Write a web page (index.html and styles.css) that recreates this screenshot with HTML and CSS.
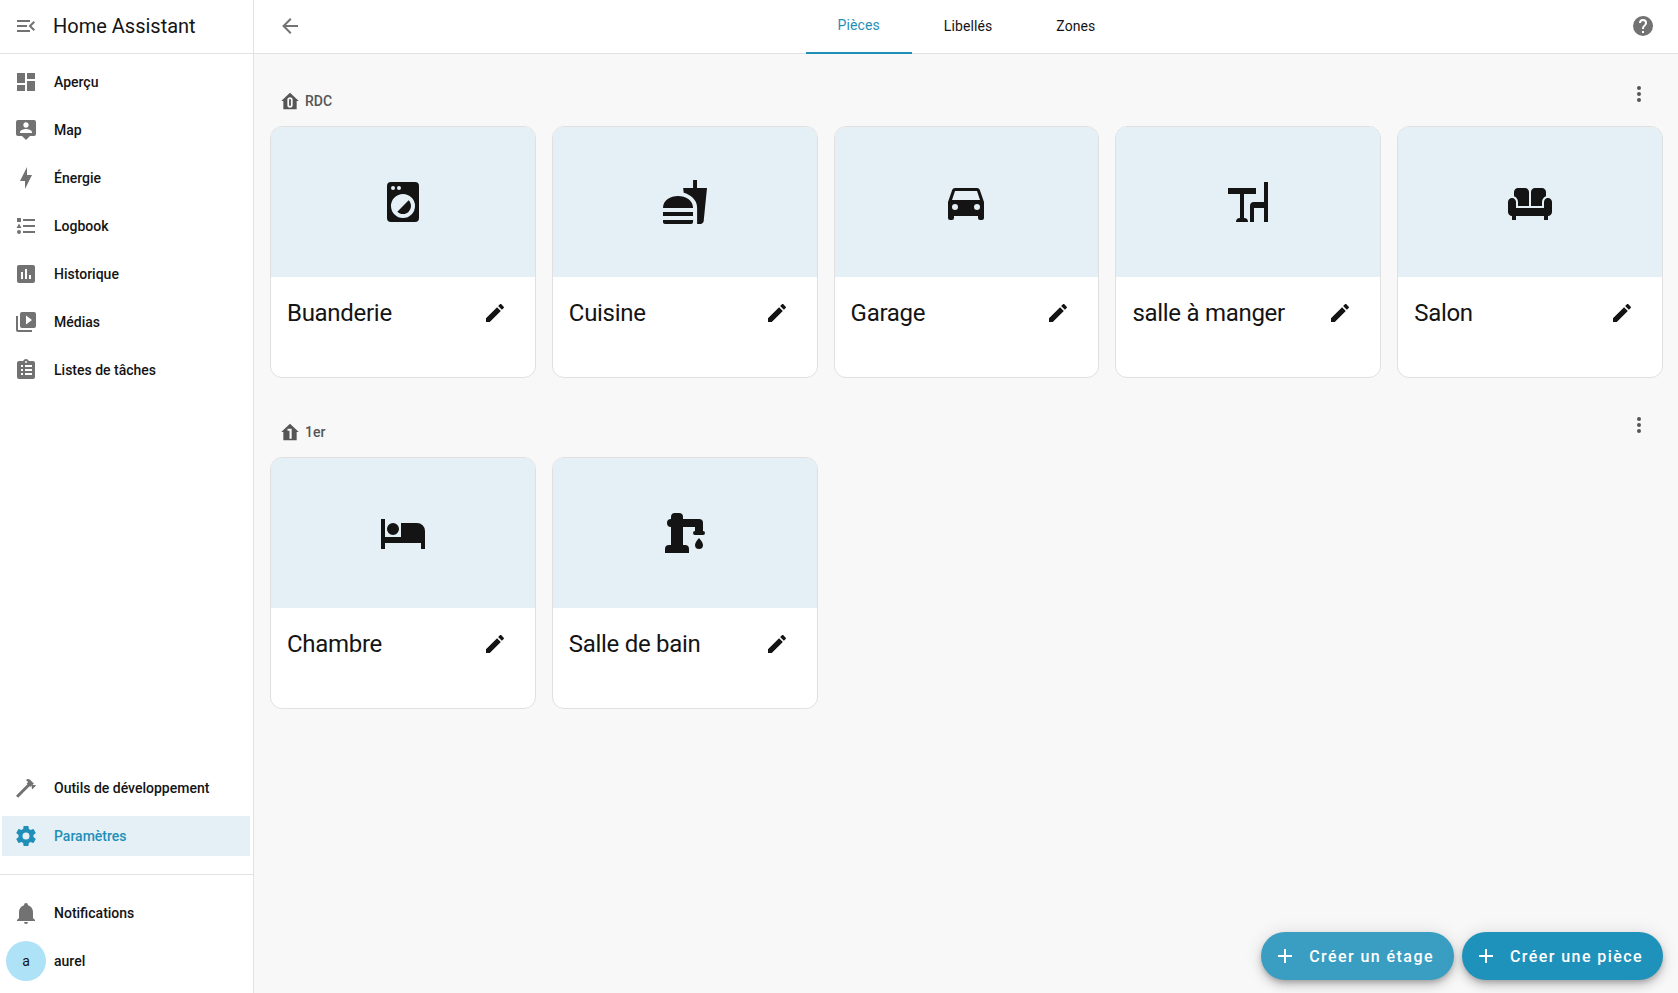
FILE: index.html
```html
<!DOCTYPE html>
<html lang="fr">
<head>
    <meta charset="UTF-8">
    <meta name="viewport" content="width=device-width, initial-scale=1.0">
    <title>Home Assistant</title>
    <link rel="stylesheet" href="styles.css">
</head>
<body>
    <svg class="sprite">
        <symbol id="pencil" viewBox="0 0 24 24"><path d="M20.71,7.04C21.1,6.65 21.1,6 20.71,5.63L18.37,3.29C18,2.9 17.35,2.9 16.96,3.29L15.12,5.12L18.87,8.87M3,17.25V21H6.75L17.81,9.93L14.06,6.18L3,17.25Z"/></symbol>
        <symbol id="dots" viewBox="0 0 24 24"><path d="M12,16A2,2 0 0,1 14,18A2,2 0 0,1 12,20A2,2 0 0,1 10,18A2,2 0 0,1 12,16M12,10A2,2 0 0,1 14,12A2,2 0 0,1 12,14A2,2 0 0,1 10,12A2,2 0 0,1 12,10M12,4A2,2 0 0,1 14,6A2,2 0 0,1 12,8A2,2 0 0,1 10,6A2,2 0 0,1 12,4Z"/></symbol>
        <symbol id="plus" viewBox="0 0 24 24"><path d="M19,13H13V19H11V13H5V11H11V5H13V11H19V13Z"/></symbol>
    </svg>

    <aside class="sidebar">
        <div class="sidebar-header">
            <svg class="icon" viewBox="0 0 24 24"><path d="M21,15.61L19.59,17L14.58,12L19.59,7L21,8.39L17.44,12L21,15.61M3,6H16V8H3V6M3,13V11H13V13H3M3,18V16H16V18H3Z"/></svg>
            <span class="title">Home Assistant</span>
        </div>

        <nav class="nav-list">
            <a class="nav-item">
                <svg class="icon" viewBox="0 0 24 24"><path d="M13,3V9H21V3M13,21H21V11H13M3,21H11V15H3M3,13H11V3H3V13Z"/></svg>
                <span>Aperçu</span>
            </a>
            <a class="nav-item">
                <svg class="icon" viewBox="0 0 24 24"><path d="M20,2H4A2,2 0 0,0 2,4V16A2,2 0 0,0 4,18H8L12,22L16,18H20A2,2 0 0,0 22,16V4A2,2 0 0,0 20,2M12,4.3C13.5,4.3 14.7,5.5 14.7,7C14.7,8.5 13.5,9.7 12,9.7C10.5,9.7 9.3,8.5 9.3,7C9.3,5.5 10.5,4.3 12,4.3M18,15H6V14.1C6,12.1 10,11 12,11C14,11 18,12.1 18,14.1V15Z"/></svg>
                <span>Map</span>
            </a>
            <a class="nav-item">
                <svg class="icon" viewBox="0 0 24 24"><path d="M11 15H6L13 1V9H18L11 23V15Z"/></svg>
                <span>Énergie</span>
            </a>
            <a class="nav-item">
                <svg class="icon" viewBox="0 0 24 24"><path d="M5,9.5L7.5,14H2.5L5,9.5M3,4H7V8H3V4M5,20A2,2 0 0,0 7,18A2,2 0 0,0 5,16A2,2 0 0,0 3,18A2,2 0 0,0 5,20M9,5V7H21V5H9M9,19H21V17H9V19M9,13H21V11H9V13Z"/></svg>
                <span>Logbook</span>
            </a>
            <a class="nav-item">
                <svg class="icon" viewBox="0 0 24 24"><path d="M9 17H7V10H9V17M13 17H11V7H13V17M17 17H15V13H17V17M19 3H5C3.9 3 3 3.9 3 5V19C3 20.1 3.9 21 5 21H19C20.1 21 21 20.1 21 19V5C21 3.9 20.1 3 19 3Z"/></svg>
                <span>Historique</span>
            </a>
            <a class="nav-item">
                <svg class="icon" viewBox="0 0 24 24"><path d="M4,6H2V20A2,2 0 0,0 4,22H18V20H4V6M20,2H8A2,2 0 0,0 6,4V16A2,2 0 0,0 8,18H20A2,2 0 0,0 22,16V4A2,2 0 0,0 20,2M12,14.5V5.5L18,10L12,14.5Z"/></svg>
                <span>Médias</span>
            </a>
            <a class="nav-item">
                <svg class="icon" viewBox="0 0 24 24"><path d="M19,3H14.82C14.4,1.84 13.3,1 12,1C10.7,1 9.6,1.84 9.18,3H5A2,2 0 0,0 3,5V19A2,2 0 0,0 5,21H19A2,2 0 0,0 21,19V5A2,2 0 0,0 19,3M12,3A1,1 0 0,1 13,4A1,1 0 0,1 12,5A1,1 0 0,1 11,4A1,1 0 0,1 12,3M7,7H9V9H7V7M7,11H9V13H7V11M7,15H9V17H7V15M11,7H18V9H11V7M11,11H18V13H11V11M11,15H18V17H11V15Z"/></svg>
                <span>Listes de tâches</span>
            </a>
        </nav>

        <nav class="nav-list nav-tools">
            <a class="nav-item">
                <svg class="icon" viewBox="0 0 24 24"><path d="M2,19.63L13.43,8.2L12.72,7.5L14.14,6.07L12,3.89C13.2,2.7 15.09,2.7 16.27,3.89L19.87,7.5L18.45,8.91H21.29L22,9.62L18.45,13.21L17.74,12.5V9.62L16.27,11.04L15.56,10.33L4.13,21.76L2,19.63Z"/></svg>
                <span>Outils de développement</span>
            </a>
            <a class="nav-item active">
                <svg class="icon" viewBox="0 0 24 24"><path d="M12,15.5A3.5,3.5 0 0,1 8.5,12A3.5,3.5 0 0,1 12,8.5A3.5,3.5 0 0,1 15.5,12A3.5,3.5 0 0,1 12,15.5M19.43,12.97C19.47,12.65 19.5,12.33 19.5,12C19.5,11.67 19.47,11.34 19.43,11L21.54,9.37C21.73,9.22 21.78,8.95 21.66,8.73L19.66,5.27C19.54,5.05 19.27,4.96 19.05,5.05L16.56,6.05C16.04,5.66 15.5,5.32 14.87,5.07L14.5,2.42C14.46,2.18 14.25,2 14,2H10C9.75,2 9.54,2.18 9.5,2.42L9.13,5.07C8.5,5.32 7.96,5.66 7.44,6.05L4.95,5.05C4.73,4.96 4.46,5.05 4.34,5.27L2.34,8.73C2.21,8.95 2.27,9.22 2.46,9.37L4.57,11C4.53,11.34 4.5,11.67 4.5,12C4.5,12.33 4.53,12.65 4.57,12.97L2.46,14.63C2.27,14.78 2.21,15.05 2.34,15.27L4.34,18.73C4.46,18.95 4.73,19.03 4.95,18.95L7.44,17.94C7.96,18.34 8.5,18.68 9.13,18.93L9.5,21.58C9.54,21.82 9.75,22 10,22H14C14.25,22 14.46,21.82 14.5,21.58L14.87,18.93C15.5,18.67 16.04,18.34 16.56,17.94L19.05,18.95C19.27,19.03 19.54,18.95 19.66,18.73L21.66,15.27C21.78,15.05 21.73,14.78 21.54,14.63L19.43,12.97Z"/></svg>
                <span>Paramètres</span>
            </a>
        </nav>

        <nav class="nav-list nav-user">
            <a class="nav-item">
                <svg class="icon" viewBox="0 0 24 24"><path d="M21,19V20H3V19L5,17V11C5,7.9 7.03,5.17 10,4.29C10,4.19 10,4.1 10,4A2,2 0 0,1 12,2A2,2 0 0,1 14,4C14,4.1 14,4.19 14,4.29C16.97,5.17 19,7.9 19,11V17L21,19M14,21A2,2 0 0,1 12,23A2,2 0 0,1 10,21"/></svg>
                <span>Notifications</span>
            </a>
            <a class="nav-item profile">
                <span class="avatar">a</span>
                <span>aurel</span>
            </a>
        </nav>
    </aside>

    <div class="main">
        <header class="toolbar">
            <svg class="icon" viewBox="0 0 24 24"><path d="M20,11V13H8L13.5,18.5L12.08,19.92L4.16,12L12.08,4.08L13.5,5.5L8,11H20Z"/></svg>
            <div class="tabs">
                <a class="tab active">Pièces</a>
                <a class="tab">Libellés</a>
                <a class="tab">Zones</a>
            </div>
            <svg class="icon" viewBox="0 0 24 24"><path d="M15.07,11.25L14.17,12.17C13.45,12.89 13,13.5 13,15H11V14.5C11,13.39 11.45,12.39 12.17,11.67L13.41,10.41C13.78,10.05 14,9.55 14,9C14,7.89 13.1,7 12,7A2,2 0 0,0 10,9H8A4,4 0 0,1 12,5A4,4 0 0,1 16,9C16,9.88 15.64,10.67 15.07,11.25M13,19H11V17H13M12,2A10,10 0 0,0 2,12A10,10 0 0,0 12,22A10,10 0 0,0 22,12C22,6.47 17.5,2 12,2Z"/></svg>
        </header>

        <main class="content">
            <section class="floor">
                <div class="floor-header">
                    <h2><svg class="icon" viewBox="0 0 24 24"><path d="M12,2L1.5,12H4V22H20V12H22.5L12,2M12,7.5A3.2,3.2 0 0,1 15.2,10.7V16.8A3.2,3.2 0 0,1 8.8,16.8V10.7A3.2,3.2 0 0,1 12,7.5M12,9.6A1.1,1.1 0 0,0 10.9,10.7V16.8A1.1,1.1 0 0,0 13.1,16.8V10.7A1.1,1.1 0 0,0 12,9.6Z"/></svg>RDC</h2>
                    <svg class="icon" viewBox="0 0 24 24"><use href="#dots"/></svg>
                </div>
                <div class="areas">
                    <div class="card">
                        <div class="picture">
                            <svg viewBox="0 0 24 24"><path d="M14.83,11.17C16.39,12.73 16.39,15.26 14.83,16.83C13.27,18.39 10.74,18.39 9.17,16.83L14.83,11.17M6,2H18A2,2 0 0,1 20,4V20A2,2 0 0,1 18,22H6A2,2 0 0,1 4,20V4A2,2 0 0,1 6,2M7,4A1,1 0 0,0 6,5A1,1 0 0,0 7,6A1,1 0 0,0 8,5A1,1 0 0,0 7,4M10,4A1,1 0 0,0 9,5A1,1 0 0,0 10,6A1,1 0 0,0 11,5A1,1 0 0,0 10,4M12,8A6,6 0 0,0 6,14A6,6 0 0,0 12,20A6,6 0 0,0 18,14A6,6 0 0,0 12,8Z"/></svg>
                        </div>
                        <div class="card-header">Buanderie<svg class="icon"><use href="#pencil"/></svg></div>
                    </div>
                    <div class="card">
                        <div class="picture">
                            <svg viewBox="0 0 24 24"><path d="M18.06 23h1.66c.84 0 1.53-.65 1.63-1.47L23 5.05h-5V1h-1.97v4.05h-4.97l.3 2.34c1.71.47 3.31 1.32 4.27 2.26 1.44 1.42 2.43 2.89 2.43 5.29V23M1 22v-1h15.03v1c0 .54-.45 1-1.03 1H2c-.55 0-1-.46-1-1m15.03-7C16.03 7 1 7 1 15h15.03M1 17h15v2H1v-2Z"/></svg>
                        </div>
                        <div class="card-header">Cuisine<svg class="icon"><use href="#pencil"/></svg></div>
                    </div>
                    <div class="card">
                        <div class="picture">
                            <svg viewBox="0 0 24 24"><path d="M5,11L6.5,6.5H17.5L19,11M17.5,16A1.5,1.5 0 0,1 16,14.5A1.5,1.5 0 0,1 17.5,13A1.5,1.5 0 0,1 19,14.5A1.5,1.5 0 0,1 17.5,16M6.5,16A1.5,1.5 0 0,1 5,14.5A1.5,1.5 0 0,1 6.5,13A1.5,1.5 0 0,1 8,14.5A1.5,1.5 0 0,1 6.5,16M18.92,6C18.72,5.42 18.16,5 17.5,5H6.5C5.84,5 5.28,5.42 5.08,6L3,12V20A1,1 0 0,0 4,21H5A1,1 0 0,0 6,20V19H18V20A1,1 0 0,0 19,21H20A1,1 0 0,0 21,20V12L18.92,6Z"/></svg>
                        </div>
                        <div class="card-header">Garage<svg class="icon"><use href="#pencil"/></svg></div>
                    </div>
                    <div class="card">
                        <div class="picture">
                            <svg viewBox="0 0 24 24"><path d="M12 22H6A2 2 0 0 1 8 20V8H2V5H16V8H10V20A2 2 0 0 1 12 22M22 2V22H20V15H15V22H13V14A2 2 0 0 1 15 12H20V2Z"/></svg>
                        </div>
                        <div class="card-header">salle à manger<svg class="icon"><use href="#pencil"/></svg></div>
                    </div>
                    <div class="card">
                        <div class="picture">
                            <svg viewBox="0 0 24 24"><path d="M12.5 7C12.5 5.89 13.39 5 14.5 5H18C19.1 5 20 5.9 20 7V9.16C18.84 9.57 18 10.67 18 11.97V14H12.5V7M6 11.96V14H11.5V7C11.5 5.89 10.61 5 9.5 5H6C4.9 5 4 5.9 4 7V9.15C5.16 9.56 6 10.67 6 11.96M20.66 10.03C19.68 10.19 19 11.12 19 12.12V15H5V12C5 10.9 4.11 10 3 10S1 10.9 1 12V17C1 18.1 1.9 19 3 19V21H5V19H19V21H21V19C22.1 19 23 18.1 23 17V12C23 10.79 21.91 9.82 20.66 10.03Z"/></svg>
                        </div>
                        <div class="card-header">Salon<svg class="icon"><use href="#pencil"/></svg></div>
                    </div>
                </div>
            </section>

            <section class="floor">
                <div class="floor-header">
                    <h2><svg class="icon" viewBox="0 0 24 24"><path d="M12,2L1.5,12H4V22H20V12H22.5L12,2M9,8H14V20H11.4V10.4H9V8Z"/></svg>1er</h2>
                    <svg class="icon" viewBox="0 0 24 24"><use href="#dots"/></svg>
                </div>
                <div class="areas">
                    <div class="card">
                        <div class="picture">
                            <svg viewBox="0 0 24 24"><path d="M19,7H11V14H3V5H1V20H3V17H21V20H23V11A4,4 0 0,0 19,7M7,13A3,3 0 0,0 10,10A3,3 0 0,0 7,7A3,3 0 0,0 4,10A3,3 0 0,0 7,13Z"/></svg>
                        </div>
                        <div class="card-header">Chambre<svg class="icon"><use href="#pencil"/></svg></div>
                    </div>
                    <div class="card">
                        <div class="picture">
                            <svg viewBox="0 0 24 24"><path d="M19,14.5C19,14.5 21,16.67 21,18A2,2 0 0,1 19,20A2,2 0 0,1 17,18C17,16.67 19,14.5 19,14.5M5,18V9A2,2 0 0,1 3,7A2,2 0 0,1 5,5V4A2,2 0 0,1 7,2H9A2,2 0 0,1 11,4V5H19A2,2 0 0,1 21,7V9L21,11A1,1 0 0,1 22,12A1,1 0 0,1 21,13H17A1,1 0 0,1 16,12A1,1 0 0,1 17,11V9H11V18H12A2,2 0 0,1 14,20V22H2V20A2,2 0 0,1 4,18H5Z"/></svg>
                        </div>
                        <div class="card-header">Salle de bain<svg class="icon"><use href="#pencil"/></svg></div>
                    </div>
                </div>
            </section>
        </main>

        <div class="fabs">
            <button class="fab fab-floor"><svg class="icon"><use href="#plus"/></svg>Créer un étage</button>
            <button class="fab"><svg class="icon"><use href="#plus"/></svg>Créer une pièce</button>
        </div>
    </div>
</body>
</html>
```
FILE: styles.css
```css
* {
    box-sizing: border-box;
    margin: 0;
    padding: 0;
}

body {
    font-family: Roboto, sans-serif;
    font-size: 14px;
    color: #141414;
    background: #f8f8f8;
    display: flex;
    height: 100vh;
    overflow: hidden;
}

svg {
    fill: currentColor;
    fill-rule: evenodd;
    flex-shrink: 0;
}

.sprite {
    display: none;
}

.icon {
    width: 24px;
    height: 24px;
}

/* Sidebar */
.sidebar {
    width: 254px;
    background: white;
    border-right: 1px solid #e2e2e2;
    display: flex;
    flex-direction: column;
    flex-shrink: 0;
}

.sidebar-header {
    height: 54px;
    padding: 0 14px 2px;
    display: flex;
    align-items: center;
    gap: 15px;
    border-bottom: 1px solid #e2e2e2;
}

.sidebar-header .icon {
    color: #727272;
}

.title {
    font-size: 20px;
}

.nav-list {
    padding: 8px 3px 0 2px;
    display: flex;
    flex-direction: column;
    gap: 8px;
}

.nav-item {
    height: 40px;
    padding-left: 12px;
    display: flex;
    align-items: center;
    gap: 16px;
    font-weight: 500;
}

.nav-item .icon {
    color: #727272;
}

.nav-item.active {
    background: #e4f0f6;
}

.nav-item.active,
.nav-item.active .icon {
    color: #1f8fb8;
}

.nav-tools {
    margin-top: auto;
    padding-bottom: 18px;
}

.nav-user {
    border-top: 1px solid #e2e2e2;
    padding-top: 18px;
    padding-bottom: 12px;
}

.profile {
    padding-left: 4px;
    gap: 8px;
}

.avatar {
    width: 40px;
    height: 40px;
    border-radius: 50%;
    background: #aee2f7;
    display: flex;
    align-items: center;
    justify-content: center;
    font-weight: 400;
}

/* Main panel */
.main {
    flex: 1;
    display: flex;
    flex-direction: column;
}

.toolbar {
    height: 54px;
    padding: 0 23px 0 24px;
    background: white;
    border-bottom: 1px solid #e2e2e2;
    display: flex;
    align-items: center;
    justify-content: space-between;
    color: #727272;
}

.toolbar > .icon {
    margin-bottom: 2px;
}

.tabs {
    display: flex;
    align-self: stretch;
    margin-bottom: -1px;
}

.tab {
    padding: 0 32px 2px;
    display: flex;
    align-items: center;
    letter-spacing: 0.1px;
    color: #141414;
}

.tab.active {
    color: #1f8fb8;
    border-bottom: 2px solid #1f8fb8;
}

.content {
    flex: 1;
    padding: 20px 15px 0 16px;
}

.floor {
    margin-bottom: 27px;
}

.floor-header {
    height: 52px;
    padding: 0 12px 0 10px;
    display: flex;
    justify-content: space-between;
    color: #555;
}

.floor-header h2 {
    display: flex;
    align-items: center;
    gap: 5px;
    font-size: 14px;
    font-weight: 500;
    padding-top: 2px;
}

.floor-header h2 .icon {
    width: 20px;
    height: 20px;
}

.floor-header > .icon {
    margin-top: 8px;
}

.areas {
    display: grid;
    grid-template-columns: repeat(5, 1fr);
    gap: 16px;
}

.card {
    height: 252px;
    background: white;
    border: 1px solid #e0e0e0;
    border-radius: 12px;
    overflow: hidden;
}

.picture {
    height: 150px;
    background: #e4f0f6;
    display: flex;
    align-items: center;
    justify-content: center;
}

.picture svg {
    width: 48px;
    height: 48px;
}

.card-header {
    display: flex;
    align-items: center;
    justify-content: space-between;
    padding: 20px 28px 0 16px;
    font-size: 24px;
    line-height: 32px;
    letter-spacing: -0.288px;
}

/* Floating buttons */
.fabs {
    display: flex;
    justify-content: flex-end;
    gap: 8px;
    padding: 0 15px 13px;
}

.fab {
    height: 48px;
    padding: 0 20px 0 12px;
    border: none;
    border-radius: 24px;
    background: #1f92bb;
    color: white;
    font-family: inherit;
    font-size: 16px;
    font-weight: 500;
    letter-spacing: 1.43px;
    display: flex;
    align-items: center;
    gap: 12px;
    cursor: pointer;
    box-shadow: 0 3px 5px -1px rgba(0,0,0,0.2), 0 6px 10px rgba(0,0,0,0.14), 0 1px 18px rgba(0,0,0,0.12);
}

.fab-floor {
    background: #3a9ec2;
}
```
